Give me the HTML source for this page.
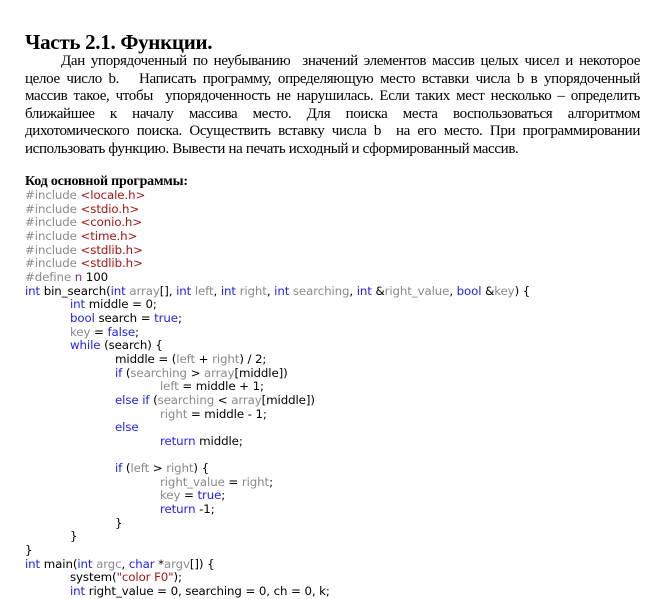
<!DOCTYPE html>
<html><head><meta charset="utf-8"><style>
body{margin:0;background:#fff;width:666px;height:589px;overflow:hidden;position:relative}
h1{position:absolute;left:25px;top:30px;margin:0;font:bold 21px "Liberation Serif",serif;color:#000;letter-spacing:-0.3px}
.p{position:absolute;left:25px;top:53px;width:615px;font:15px/17.5px "Liberation Serif",serif;color:#000;letter-spacing:-0.35px}
.p div{text-align:justify;text-align-last:justify;white-space:nowrap;height:17.5px}
.p div.l{text-align-last:left}
h2{position:absolute;left:25px;top:174px;margin:0;font:bold 14px "Liberation Serif",serif;letter-spacing:-0.2px}
pre{position:absolute;left:25px;top:189px;margin:0;font:11.8px/13.65px "DejaVu Sans",sans-serif;color:#000;tab-size:45px;-moz-tab-size:45px;letter-spacing:-0.1px}
.k{color:#2222ee}.g{color:#8a8a8a}.s{color:#a31515}
</style></head><body>
<h1>Часть 2.1. Функции.</h1>
<div class="p">
<div style="padding-left:36px">Дан упорядоченный по неубыванию&nbsp; значений элементов массив целых чисел и некоторое</div>
<div>целое число b.&nbsp;&nbsp; Написать программу, определяющую место вставки числа b в упорядоченный</div>
<div>массив такое, чтобы&nbsp; упорядоченность не нарушилась. Если таких мест несколько – определить</div>
<div>ближайшее к началу массива место. Для поиска места воспользоваться алгоритмом</div>
<div>дихотомического поиска. Осуществить вставку числа b&nbsp; на его место. При программировании</div>
<div class="l">использовать функцию. Вывести на печать исходный и сформированный массив.</div>
</div>
<h2>Код основной программы:</h2>
<pre><span class="g">#include</span> <span class="s">&lt;locale.h&gt;</span>
<span class="g">#include</span> <span class="s">&lt;stdio.h&gt;</span>
<span class="g">#include</span> <span class="s">&lt;conio.h&gt;</span>
<span class="g">#include</span> <span class="s">&lt;time.h&gt;</span>
<span class="g">#include</span> <span class="s">&lt;stdlib.h&gt;</span>
<span class="g">#include</span> <span class="s">&lt;stdlib.h&gt;</span>
<span class="g">#define</span> <span style="color:#6f2f9f">n</span> 100
<span class="k">int</span> bin_search(<span class="k">int</span> <span class="g">array</span>[], <span class="k">int</span> <span class="g">left</span>, <span class="k">int</span> <span class="g">right</span>, <span class="k">int</span> <span class="g">searching</span>, <span class="k">int</span> &amp;<span class="g">right_value</span>, <span class="k">bool</span> &amp;<span class="g">key</span>) {
	<span class="k">int</span> middle = 0;
	<span class="k">bool</span> search = <span class="k">true</span>;
	<span class="g">key</span> = <span class="k">false</span>;
	<span class="k">while</span> (search) {
		middle = (<span class="g">left</span> + <span class="g">right</span>) / 2;
		<span class="k">if</span> (<span class="g">searching</span> &gt; <span class="g">array</span>[middle])
			<span class="g">left</span> = middle + 1;
		<span class="k">else if</span> (<span class="g">searching</span> &lt; <span class="g">array</span>[middle])
			<span class="g">right</span> = middle - 1;
		<span class="k">else</span>
			<span class="k">return</span> middle;

		<span class="k">if</span> (<span class="g">left</span> &gt; <span class="g">right</span>) {
			<span class="g">right_value</span> = <span class="g">right</span>;
			<span class="g">key</span> = <span class="k">true</span>;
			<span class="k">return</span> -1;
		}
	}
}
<span class="k">int</span> main(<span class="k">int</span> <span class="g">argc</span>, <span class="k">char</span> *<span class="g">argv</span>[]) {
	system(<span class="s">"color F0"</span>);
	<span class="k">int</span> right_value = 0, searching = 0, ch = 0, k;</pre>
</body></html>
